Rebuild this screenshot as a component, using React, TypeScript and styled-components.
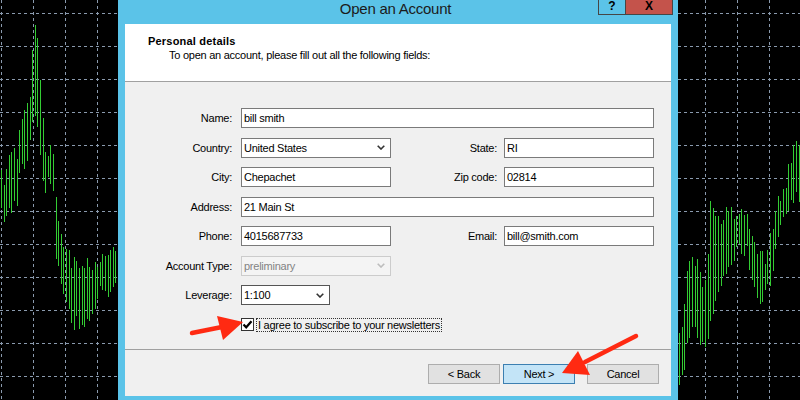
import React from "react";
import styled, { createGlobalStyle } from "styled-components";

const GlobalStyle = createGlobalStyle`
  html, body {
    margin: 0;
    padding: 0;
    background: #000;
    overflow: hidden;
  }
  body {
    font-family: "Liberation Sans", Arial, sans-serif;
  }
`;

const Page = styled.div`
  position: relative;
  display: flex;
  width: 800px;
  height: 400px;
  background: #000;
`;

const ChartPane = styled.div<{ $width: number }>`
  width: ${(p) => p.$width}px;
  height: 400px;
  flex: none;
`;

const Window = styled.div`
  width: 560px;
  height: 400px;
  flex: none;
  background: #5bc3e8;
  display: flex;
  flex-direction: column;
`;

const TitleBar = styled.div`
  height: 24px;
  display: grid;
  grid-template-columns: 1fr auto 1fr;
  align-items: start;
  padding-right: 5px;
`;

const Title = styled.div`
  grid-column: 2;
  font-size: 15px;
  line-height: 18px;
  letter-spacing: -0.25px;
  color: #1b1b1b;
`;

const CaptionButtons = styled.div`
  grid-column: 3;
  justify-self: end;
  display: flex;
`;

const CaptionButton = styled.div<{ $close?: boolean }>`
  width: ${(p) => (p.$close ? 47 : 28)}px;
  height: 15px;
  box-sizing: border-box;
  border: 1px solid #464646;
  border-top: none;
  border-left-width: ${(p) => (p.$close ? 0 : 1)}px;
  background: ${(p) => (p.$close ? "#c4534b" : "#5bc3e8")};
  color: #000;
  font-weight: bold;
  font-size: 12px;
  line-height: 12px;
  text-align: center;
`;

const Frame = styled.div`
  flex: 1;
  margin: 0 7px 4px 7px;
  display: flex;
  flex-direction: column;
  background: #f0f0f0;
`;

const Header = styled.div`
  height: 58px;
  box-sizing: border-box;
  background: #fff;
  border-bottom: 1px solid #a0a0a0;
  padding: 10px 0 0 23px;
  font-size: 11px;
  line-height: 14px;
  letter-spacing: -0.25px;
  color: #000;
`;

const HeaderTitle = styled.div`
  font-weight: bold;
  letter-spacing: 0.2px;
`;

const HeaderText = styled.div`
  padding-left: 21px;
`;

const Body = styled.div`
  flex: 1;
  padding-top: 26px;
  border-bottom: 1px solid #a0a0a0;
`;

const Form = styled.div`
  display: grid;
  grid-template-columns: 116px 150px 113px 150px;
  grid-auto-rows: 20px;
  row-gap: 9.5px;
`;

const Label = styled.div<{ $col: number; $pad: number }>`
  grid-column: ${(p) => p.$col};
  justify-self: end;
  align-self: center;
  padding-right: ${(p) => p.$pad}px;
  font-size: 11px;
  letter-spacing: -0.25px;
  color: #000;
`;

const Field = styled.div<{ $col: number; $span?: number; $width?: number; $disabled?: boolean; $dark?: boolean }>`
  grid-column: ${(p) => p.$col} / span ${(p) => p.$span || 1};
  width: ${(p) => (p.$width ? `${p.$width}px` : "auto")};
  box-sizing: border-box;
  height: 20px;
  display: flex;
  align-items: center;
  justify-content: space-between;
  padding: 0 5px 0 2px;
  background: ${(p) => (p.$disabled ? "#f4f4f4" : "#fff")};
  border: 1px solid ${(p) => (p.$disabled ? "#cccccc" : p.$dark ? "#555" : "#7a7a7a")};
  font-size: 11px;
  letter-spacing: -0.25px;
  color: ${(p) => (p.$disabled ? "#838383" : "#000")};
`;

const CheckRow = styled.div`
  grid-column: 2 / span 3;
  display: flex;
  align-items: center;
  gap: 2px;
`;

const Box = styled.div`
  width: 13px;
  height: 13px;
  box-sizing: border-box;
  border: 1px solid #333;
  background: #fff;
  display: flex;
  align-items: center;
  justify-content: center;
`;

const CheckLabel = styled.div`
  border: 1px dotted #333;
  padding: 0 1px;
  font-size: 11px;
  line-height: 12px;
  letter-spacing: -0.25px;
  color: #000;
`;

const Footer = styled.div`
  height: 46px;
  box-sizing: border-box;
  padding: 14px 12px 0 0;
  display: flex;
  justify-content: flex-end;
  align-items: flex-start;
`;

const Button = styled.div<{ $primary?: boolean; $gap: number }>`
  width: 72px;
  height: 20px;
  box-sizing: border-box;
  margin-left: ${(p) => p.$gap}px;
  background: ${(p) => (p.$primary ? "#c3e4f7" : "#e1e1e1")};
  border: 1px solid ${(p) => (p.$primary ? "#3c7fb1" : "#adadad")};
  font-size: 11px;
  line-height: 18px;
  letter-spacing: -0.25px;
  text-align: center;
  color: #000;
`;

const Overlay = styled.svg`
  position: absolute;
  left: 0;
  top: 0;
  pointer-events: none;
`;

type Anchor = [number, number, number];

const leftAnchors: Anchor[] = [
  [0, 180, 215], [5, 175, 220], [10, 150, 210], [17, 155, 205], [20, 128, 165],
  [25, 112, 160], [30, 102, 145], [34, 18, 110], [37, 40, 115], [41, 92, 165],
  [45, 150, 185], [50, 150, 185], [53, 155, 200], [56, 212, 262], [60, 232, 272],
  [66, 252, 305], [72, 262, 330], [80, 265, 320], [88, 265, 318], [95, 260, 300],
  [105, 252, 290], [118, 245, 280],
];

const rightAnchors: Anchor[] = [
  [0, 335, 390], [5, 330, 372], [8, 265, 350], [12, 262, 330], [19, 265, 330],
  [23, 282, 350], [28, 280, 352], [33, 195, 312], [37, 212, 300], [42, 228, 292],
  [48, 208, 265], [56, 212, 255], [64, 216, 250], [70, 218, 252], [74, 246, 290],
  [82, 256, 296], [90, 255, 293], [94, 226, 270], [100, 200, 236], [108, 186, 215],
  [114, 148, 200], [122, 140, 195],
];

function mulberry32(seed: number) {
  let a = seed;
  return () => {
    a |= 0;
    a = (a + 0x6d2b79f5) | 0;
    let t = Math.imul(a ^ (a >>> 15), 1 | a);
    t = (t + Math.imul(t ^ (t >>> 7), 61 | t)) ^ t;
    return ((t ^ (t >>> 14)) >>> 0) / 4294967296;
  };
}

function makeBars(anchors: Anchor[], width: number, seed: number) {
  const rand = mulberry32(seed);
  const bars: { x: number; top: number; bottom: number }[] = [];
  for (let x = 1; x < width; x += 2.6) {
    let i = 0;
    while (i < anchors.length - 2 && anchors[i + 1][0] < x) i++;
    const [x0, t0, b0] = anchors[i];
    const [x1, t1, b1] = anchors[i + 1];
    const k = Math.min(1, Math.max(0, (x - x0) / (x1 - x0 || 1)));
    const top = t0 + (t1 - t0) * k + (rand() - 0.5) * 18;
    let bottom = b0 + (b1 - b0) * k + (rand() - 0.5) * 18;
    if (bottom < top + 10) bottom = top + 10;
    bars.push({ x: Math.round(x) + 0.5, top: Math.round(top), bottom: Math.round(bottom) });
  }
  return bars;
}

const Chart = ({ width, offset, anchors, seed }: { width: number; offset: number; anchors: Anchor[]; seed: number }) => {
  const vLines: number[] = [];
  for (let x = 1; x < offset + width; x += 32) if (x >= offset) vLines.push(x - offset);
  const hLines: number[] = [];
  for (let y = 13; y < 400; y += 33) hLines.push(y);
  const bars = makeBars(anchors, width, seed);
  return (
    <ChartPane $width={width}>
      <svg width={width} height={400} shapeRendering="crispEdges">
        {vLines.map((x) => (
          <line key={`v${x}`} x1={x + 0.5} y1={0} x2={x + 0.5} y2={400} stroke="#8a9aae" strokeWidth={1} strokeDasharray="3 3" />
        ))}
        {hLines.map((y) => (
          <line key={`h${y}`} x1={0} y1={y + 0.5} x2={width} y2={y + 0.5} stroke="#8a9aae" strokeWidth={1} strokeDasharray="3 3" />
        ))}
        {bars.map((b, i) => (
          <line key={i} x1={b.x} y1={b.top} x2={b.x} y2={b.bottom} stroke="#33cc33" strokeWidth={1} />
        ))}
      </svg>
    </ChartPane>
  );
};

const Chevron = ({ color = "#333" }: { color?: string }) => (
  <svg width="8" height="5" viewBox="0 0 8 5">
    <path d="M0.7 0.7 L4 4 L7.3 0.7" fill="none" stroke={color} strokeWidth="1.6" />
  </svg>
);

const Check = () => (
  <svg width="11" height="11" viewBox="0 0 11 11">
    <path d="M1.5 5.5 L4.2 8.3 L9.5 2.2" fill="none" stroke="#000" strokeWidth="2.2" />
  </svg>
);

const Arrows = () => (
  <Overlay width={800} height={400}>
    <line x1={192} y1={333} x2={222} y2={327} stroke="#ff2a12" strokeWidth={4.5} strokeLinecap="round" />
    <polygon points="243,322 217,316 223,340" fill="#ff2a12" />
    <line x1={636} y1={336} x2={585} y2={362} stroke="#ff2a12" strokeWidth={4.5} strokeLinecap="round" />
    <polygon points="562,373 578,351 590,375" fill="#ff2a12" />
  </Overlay>
);

export default function App() {
  return (
    <Page>
      <GlobalStyle />
      <Chart width={118} offset={0} anchors={leftAnchors} seed={7} />
      <Window>
        <TitleBar>
          <Title>Open an Account</Title>
          <CaptionButtons>
            <CaptionButton>?</CaptionButton>
            <CaptionButton $close>X</CaptionButton>
          </CaptionButtons>
        </TitleBar>
        <Frame>
          <Header>
            <HeaderTitle>Personal details</HeaderTitle>
            <HeaderText>To open an account, please fill out all the following fields:</HeaderText>
          </Header>
          <Body>
            <Form>
              <Label $col={1} $pad={9}>Name:</Label>
              <Field $col={2} $span={3}>bill smith</Field>

              <Label $col={1} $pad={9}>Country:</Label>
              <Field $col={2}>
                United States
                <Chevron />
              </Field>
              <Label $col={3} $pad={7}>State:</Label>
              <Field $col={4}>RI</Field>

              <Label $col={1} $pad={9}>City:</Label>
              <Field $col={2}>Chepachet</Field>
              <Label $col={3} $pad={7}>Zip code:</Label>
              <Field $col={4}>02814</Field>

              <Label $col={1} $pad={9}>Address:</Label>
              <Field $col={2} $span={3}>21 Main St</Field>

              <Label $col={1} $pad={9}>Phone:</Label>
              <Field $col={2}>4015687733</Field>
              <Label $col={3} $pad={7}>Email:</Label>
              <Field $col={4}>bill@smith.com</Field>

              <Label $col={1} $pad={9}>Account Type:</Label>
              <Field $col={2} $disabled>
                preliminary
                <Chevron color="#bdbdbd" />
              </Field>

              <Label $col={1} $pad={9}>Leverage:</Label>
              <Field $col={2} $width={89} $dark>
                1:100
                <Chevron />
              </Field>

              <CheckRow>
                <Box>
                  <Check />
                </Box>
                <CheckLabel>I agree to subscribe to your newsletters</CheckLabel>
              </CheckRow>
            </Form>
          </Body>
          <Footer>
            <Button $gap={0}>&lt; Back</Button>
            <Button $gap={3} $primary>Next &gt;</Button>
            <Button $gap={12}>Cancel</Button>
          </Footer>
        </Frame>
      </Window>
      <Chart width={122} offset={678} anchors={rightAnchors} seed={21} />
      <Arrows />
    </Page>
  );
}
